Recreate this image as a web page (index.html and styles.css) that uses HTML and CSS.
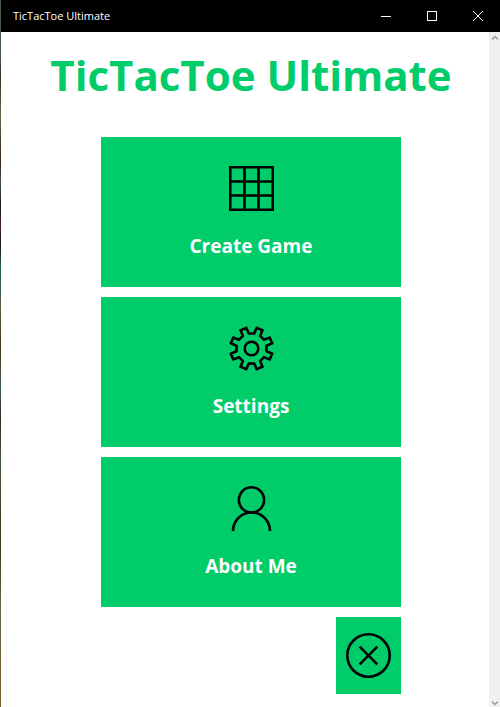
FILE: index.html
```html
<!DOCTYPE html>
<html lang="en">
<head>
<meta charset="utf-8">
<title>TicTacToe Ultimate</title>
<link rel="stylesheet" href="styles.css">
</head>
<body>
<div class="window">
  <header class="titlebar">
    <span class="caption">TicTacToe Ultimate</span>
    <button class="control" aria-label="Minimize"><svg width="10" height="10" shape-rendering="crispEdges"><path d="M0 5.5H10"/></svg></button>
    <button class="control" aria-label="Maximize"><svg width="10" height="10" shape-rendering="crispEdges"><path d="M.5 .5H9.5V9.5H.5Z"/></svg></button>
    <button class="control" aria-label="Close"><svg width="10" height="10"><path d="M0 0L10 10M10 0L0 10"/></svg></button>
  </header>
  <main class="content">
    <h1 class="heading">TicTacToe Ultimate</h1>
    <nav class="menu">
      <button class="tile">
        <svg class="icon" viewBox="0 0 45 45" aria-hidden="true"><path d="M1.25 1.25H43.75V43.75H1.25ZM15.5 1V44M29.5 1V44M1 15.5H44M1 29.5H44"/></svg>
        <span>Create Game</span>
      </button>
      <button class="tile">
        <svg class="icon" viewBox="-22.5 -22.5 45 45" aria-hidden="true"><path d="M-5.2-20.6L-2.7-15H2.7L5.2-20.6L10.9-18.2L8.7-12.5L12.5-8.7L18.2-10.9L20.6-5.2L15-2.7V2.7L20.6 5.2L18.2 10.9L12.5 8.7L8.7 12.5L10.9 18.2L5.2 20.6L2.7 15H-2.7L-5.2 20.6L-10.9 18.2L-8.7 12.5L-12.5 8.7L-18.2 10.9L-20.6 5.2L-15 2.7V-2.7L-20.6-5.2L-18.2-10.9L-12.5-8.7L-8.7-12.5L-10.9-18.2Z"/><circle r="6.8"/></svg>
        <span>Settings</span>
      </button>
      <button class="tile">
        <svg class="icon" viewBox="0 0 45 45" aria-hidden="true"><circle cx="22.5" cy="13.9" r="12.6"/><path d="M4 45A18.5 18.5 0 0 1 41 45"/></svg>
        <span>About Me</span>
      </button>
      <button class="tile exit" aria-label="Exit">
        <svg class="icon" viewBox="0 0 45 45" aria-hidden="true"><circle cx="22.5" cy="22.5" r="21.2"/><path d="M13.7 13.7L31.3 31.3M31.3 13.7L13.7 31.3"/></svg>
      </button>
    </nav>
    <div class="scrollbar" aria-hidden="true">
      <svg width="8" height="6"><path d="M1 4.5L4 1.5L7 4.5"/></svg>
      <svg width="8" height="6"><path d="M1 1.5L4 4.5L7 1.5"/></svg>
    </div>
  </main>
</div>
</body>
</html>
```
FILE: styles.css
```css
* {
  box-sizing: border-box;
}

body {
  margin: 0;
  overflow-x: hidden;
  background: #fff;
  font-family: "Open Sans", "Noto Sans", sans-serif;
}

button {
  margin: 0;
  padding: 0;
  border: 0;
  font: inherit;
}

.window {
  display: flex;
  flex-direction: column;
  width: calc(100% + 1px);
  min-height: 100vh;
  border-left: 1px solid;
  border-image: linear-gradient(#4b5d51, #465c4e 8%, #3a2b1c 11%, #686650 16%, #352315 23%, #3d5546 26%, #171a18 29%, #481e24 32%, #171d19 35%, #236656 38%, #5f5940 44%, #43351c 49%, #40604c 55%, #33281c 59%, #40583e 65%, #40361f 77%, #6c664a 86%, #776126) 1;
}

.titlebar {
  display: flex;
  height: 32px;
  background: #000;
  color: #fff;
}

.caption {
  flex: 1;
  padding-left: 12px;
  font-size: 11px;
  line-height: 32px;
}

.control {
  display: grid;
  place-items: center;
  width: 46px;
  background: transparent;
}

.control svg {
  fill: none;
  stroke: #fff;
}

.content {
  position: relative;
  flex: 1;
  padding-bottom: 13px;
}

.heading {
  margin: 0 0 32px;
  padding-top: 13px;
  color: #00cc6a;
  font-size: 42px;
  font-weight: 700;
  line-height: 60px;
  text-align: center;
  white-space: nowrap;
}

.menu {
  display: flex;
  flex-direction: column;
  gap: 10px;
  width: 60%;
  min-width: 300px;
  margin: 0 auto;
}

.tile {
  display: flex;
  flex-direction: column;
  align-items: center;
  gap: 21px;
  height: 150px;
  padding-top: 29px;
  background: #00cc6a;
  color: #fff;
  font-size: 19px;
  font-weight: 700;
  line-height: 28px;
}

.exit {
  align-self: flex-end;
  height: auto;
  padding: 16px 10px;
}

.icon {
  width: 45px;
  height: 45px;
  fill: none;
  stroke: #000;
  stroke-width: 2.6;
}

.scrollbar {
  position: absolute;
  top: 0;
  right: 0;
  bottom: 0;
  display: flex;
  flex-direction: column;
  align-items: center;
  justify-content: space-between;
  width: 12px;
  padding: 3px 0 1px;
  background: #f0f0f0;
}

.scrollbar svg {
  fill: none;
  stroke: #999;
  stroke-width: 1.5;
}
```
